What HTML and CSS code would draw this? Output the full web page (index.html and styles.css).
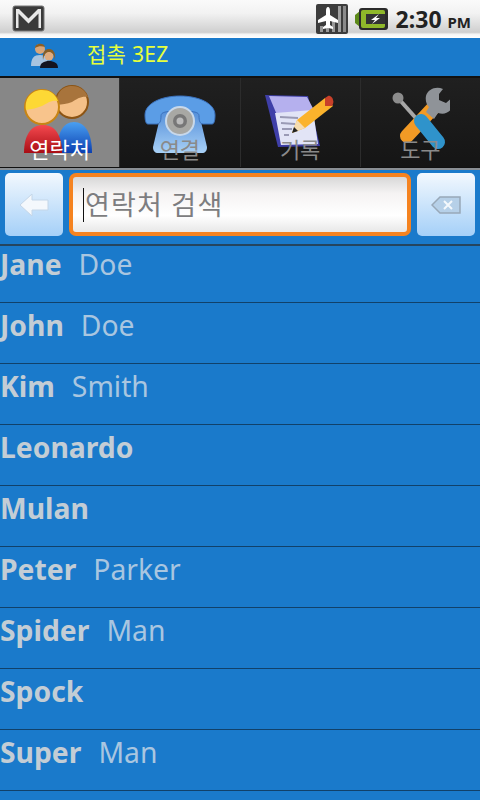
FILE: index.html
```html
<!DOCTYPE html>
<html lang="ko">
<head>
    <meta charset="UTF-8">
    <meta name="viewport" content="width=device-width, initial-scale=1.0">
    <title>연락처</title>
    <link rel="stylesheet" href="styles.css">
</head>
<body>
    <!-- Status bar -->
    <div class="status-bar">
        <svg class="gmail-icon" width="34" height="27" viewBox="0 0 34 27">
            <rect x="1" y="1" width="31" height="25" rx="2" fill="#3a3a3a" stroke="#777"/>
            <path d="M4 23V4h3l9.500 9.500L26 4h3v19h-2.500V8.500l-10 10-10-10V23z" fill="#e8e8e8"/>
        </svg>
        <div class="status-right">
            <svg width="32" height="30" viewBox="0 0 32 30">
                <rect width="32" height="30" rx="2" fill="#3c3c3c"/>
                <rect x="22" y="2" width="3" height="26" fill="#a0a0a0"/>
                <rect x="27" y="2" width="3" height="26" fill="#8a8a8a"/>
                <rect x="16" y="15" width="3" height="13" fill="#999"/>
                <rect x="10" y="20" width="3" height="8" fill="#999"/>
                <rect x="4" y="22" width="3" height="6" fill="#999"/>
                <path d="M12 3c1.500 0 2 2 2 4v4l8 5v3l-8-2v4l3 2v2l-5-1-5 1v-2l3-2v-4l-8 2v-3l8-5V7c0-2 .5-4 2-4z" fill="#fff"/>
            </svg>
            <svg class="battery-icon" width="33" height="22" viewBox="0 0 33 22">
                <path d="M0 7l5-4v16l-5-4z" fill="#5d8a1a"/>
                <rect x="4" y="0" width="29" height="22" rx="3" fill="#2a2a2a"/>
                <rect x="6" y="2" width="24" height="18" rx="2" fill="#8fb82a"/>
                <rect x="11" y="6" width="19" height="10" fill="#333"/>
                <path d="M24 6l-8 6h4l-3 4 8-6h-4z" fill="#fff"/>
            </svg>
            <div class="clock">2:30 <span class="clock-ampm">PM</span></div>
        </div>
    </div>

    <!-- Title bar -->
    <div class="title-bar">
        <svg class="title-icon" width="28" height="26" viewBox="0 0 28 26">
            <circle cx="10" cy="7" r="5" fill="#d9a679"/>
            <path d="M5 6c0-5 9-6 10-1-3-1-7-1-10 1z" fill="#8a5e24"/>
            <path d="M1 24c0-8 3-11 9-11s8 3 8 11z" fill="#a9c4e0"/>
            <circle cx="19" cy="14" r="4.500" fill="#e0ab7e"/>
            <path d="M13 18c-1-9 3-11 6-11s7 2 6 11c-1-6-3-8-6-8s-5 2-6 8z" fill="#8a5e24"/>
            <path d="M10 26c0-5 4-7 9-7s9 2 9 7z" fill="#141420"/>
        </svg>
        <span class="title-text">접촉 3EZ</span>
    </div>

    <!-- Tabs -->
    <div class="tabs">
        <div class="tab active">
            <svg width="72" height="76" viewBox="0 0 72 76">
                <defs>
                    <linearGradient id="redBody" x1="0" y1="0" x2="0" y2="1"><stop offset="0" stop-color="#f4494f"/><stop offset="1" stop-color="#a80d14"/></linearGradient>
                    <linearGradient id="blueBody" x1="0" y1="0" x2="0" y2="1"><stop offset="0" stop-color="#4aa0f2"/><stop offset="1" stop-color="#0b3fb0"/></linearGradient>
                </defs>
                <path d="M33 72c0-20 6-31 17-31s18 11 18 31z" fill="url(#blueBody)"/>
                <circle cx="48" cy="21" r="16" fill="#f4c088" stroke="#8c5414" stroke-width="2"/>
                <path d="M33 24c-2-12 6-19 15-19 8 0 13 4 16 11-7-1-11 2-16 5-5 2-10 2-15 3z" fill="#a8743c"/>
                <path d="M0 72c0-18 7-28 19-28s19 10 19 28z" fill="url(#redBody)"/>
                <circle cx="18" cy="26" r="17" fill="#f8c48c" stroke="#c88514" stroke-width="2"/>
                <path d="M2 29c-2-13 7-20 16-20 7 0 13 3 16 11-7-1-10 2-16 5-5 2-10 3-16 4z" fill="#fdd835"/>
            </svg>
            <span class="tab-label">연락처</span>
        </div>
        <div class="tab">
            <svg width="74" height="76" viewBox="0 0 74 76">
                <defs>
                    <linearGradient id="phoneBody" x1="0" y1="0" x2="0" y2="1"><stop offset="0" stop-color="#4f8bd8"/><stop offset="1" stop-color="#a8d0f6"/></linearGradient>
                </defs>
                <path d="M19 28h36l9 38c0 4-2 6-5 6H15c-3 0-5-2-5-6z" fill="url(#phoneBody)"/>
                <path d="M2 34C2 22 19 15 37 15s35 7 35 19c0 6-1 9-3 9h-9c-3 0-4-3-4-8 0-3-2-5-19-5s-19 2-19 5c0 5-1 8-4 8H5c-2 0-3-3-3-9z" fill="#5b9de6" stroke="#3a70bc"/>
                <circle cx="37" cy="40" r="14" fill="#a8a8a4" stroke="#c8d8ea" stroke-width="2"/>
                <circle cx="37" cy="40" r="7" fill="#777"/>
                <circle cx="37" cy="40" r="3.500" fill="#bbb"/>
            </svg>
            <span class="tab-label">연결</span>
        </div>
        <div class="tab">
            <svg width="72" height="76" viewBox="0 0 72 76">
                <path d="M1 14l43 1 12 50-42 1z" fill="#3f3fa8"/>
                <path d="M5 15l38 1 8 15-38 3z" fill="#b5b0ee"/>
                <path d="M11 32l38-3 5 34-37 1z" fill="#e2e4f6"/>
                <path d="M16 36l18 1M17 42l14 1M18 48l10 0M20 54l5 0" stroke="#9a9ab5" stroke-width="2"/>
                <path d="M28 52l5-13 28-22 8 8-28 22z" fill="#fbb32c"/>
                <path d="M61 17l3-2c2-1 5 2 5 4 1 2 0 4-1 6l-7 0z" fill="#c8402a"/>
                <path d="M28 52l5-13 8 8z" fill="#f6dcb0"/>
                <path d="M28 52l2-6 4 4z" fill="#222"/>
            </svg>
            <span class="tab-label">기록</span>
        </div>
        <div class="tab">
            <svg width="60" height="76" viewBox="0 0 60 76">
                <path d="M8 17l24 27" stroke="#a8a8a8" stroke-width="4"/>
                <circle cx="8" cy="17" r="5.500" fill="#8c8c8c"/>
                <path d="M44 26L17 55" stroke="#f29a25" stroke-width="14" stroke-linecap="round"/>
                <path d="M53 8c-7-3-15 0-17 7-1 5 1 9 3 11l-3 5 8 7 4-6c6 2 11 0 14-5 2-4 2-8 1-11l-7 6-7-3 0-6z" fill="#8f9398"/>
                <path d="M31 40l17 21" stroke="#2f93cb" stroke-width="14" stroke-linecap="round"/>
            </svg>
            <span class="tab-label">도구</span>
        </div>
    </div>

    <!-- Search -->
    <div class="search-bar">
        <div class="square-btn">
            <svg width="32" height="24" viewBox="0 0 32 24">
                <path d="M2 12L14 1v6h16v10H14v6z" fill="#f4f8fc" stroke="#c4d6e8"/>
            </svg>
        </div>
        <div class="search-box">
            <span class="caret"></span>
            <span class="placeholder">연락처 검색</span>
        </div>
        <div class="square-btn">
            <svg width="30" height="18" viewBox="0 0 30 18">
                <path d="M1 9l8-8h20v16H9z" fill="#b6d0e8" stroke="#98a8b8" stroke-width="1.500"/>
                <path d="M13 5l8 8M21 5l-8 8" stroke="#f4f8fc" stroke-width="2"/>
            </svg>
        </div>
    </div>

    <!-- Contact list -->
    <div class="contact-list">
        <div class="contact-items">
            <div class="contact"><b>Jane</b><span>Doe</span></div>
            <div class="contact"><b>John</b><span>Doe</span></div>
            <div class="contact"><b>Kim</b><span>Smith</span></div>
            <div class="contact"><b>Leonardo</b></div>
            <div class="contact"><b>Mulan</b></div>
            <div class="contact"><b>Peter</b><span>Parker</span></div>
            <div class="contact"><b>Spider</b><span>Man</span></div>
            <div class="contact"><b>Spock</b></div>
            <div class="contact"><b>Super</b><span>Man</span></div>
            <div class="contact"></div>
        </div>
    </div>
</body>
</html>
```

FILE: styles.css
```css
html, body {
    height: 100%;
}
body {
    margin: 0;
    height: 800px;
    overflow: hidden;
    display: flex;
    flex-direction: column;
    background-color: #1a7acb;
    font-family: "Noto Sans", "Noto Sans CJK KR", sans-serif;
}
.status-bar {
    flex: 0 0 38px;
    box-sizing: border-box;
    display: flex;
    align-items: center;
    justify-content: space-between;
    padding: 0 9px 0 12px;
    background: linear-gradient(#fafafa, #f2f2f2 35%, #cfcfcf 85%, #f4f4f4 90%, #fff);
}
.gmail-icon {
    margin-top: -1px;
}
.status-right {
    display: flex;
    align-items: center;
    gap: 6px;
}
.battery-icon {
    margin-left: 1px;
}
.clock {
    margin-left: 2px;
    font-size: 23px;
    font-weight: 700;
    color: #222;
    white-space: pre;
}
.clock-ampm {
    font-size: 15px;
}
.title-bar {
    flex: 0 0 38px;
    display: flex;
    align-items: center;
    padding-left: 30px;
    background-color: #1a7acb;
}
.title-icon {
    margin-top: -4px;
}
.title-text {
    margin-left: 29px;
    margin-top: -8px;
    font-size: 21px;
    letter-spacing: 0.3px;
    color: #e6ff3c;
}
.tabs {
    flex: 0 0 92px;
    box-sizing: border-box;
    display: flex;
    border-top: 2px solid #111;
    border-bottom: 1px solid #111;
    background-color: #1a1a1a;
}
.tab {
    flex: 1;
    position: relative;
    display: flex;
    justify-content: center;
    padding-top: 3px;
    border-left: 1px solid #2c2c2c;
    background: linear-gradient(#202020, #151515);
}
.tab:first-child {
    border-left: none;
}
.tab.active {
    background: #878787;
}
.tab-label {
    position: absolute;
    left: 0;
    right: 0;
    top: 57px;
    text-align: center;
    font-size: 22px;
    line-height: 28px;
    color: #8a8a8a;
}
.tab.active .tab-label {
    color: #fff;
}
.search-bar {
    flex: 0 0 78px;
    box-sizing: border-box;
    display: flex;
    gap: 6px;
    padding: 3px 5px 0 5px;
    border-top: 2px solid #8a8f94;
    border-bottom: 2px solid #25455f;
}
.square-btn {
    flex: 0 0 58px;
    height: 63px;
    border-radius: 5px;
    display: flex;
    align-items: center;
    justify-content: center;
    background: linear-gradient(#f2f8fe, #a5d0f8);
}
.search-box {
    flex: 1;
    height: 63px;
    box-sizing: border-box;
    display: flex;
    align-items: center;
    padding-left: 10px;
    border: 4px solid #f58320;
    border-radius: 7px;
    background: linear-gradient(#d8d8d8, #f5f3f3 30%, #ffffff 70%, #e8e8e8);
}
.caret {
    width: 1px;
    height: 34px;
    margin-right: 1px;
    background-color: #111;
}
.placeholder {
    margin-top: -2px;
    font-size: 27px;
    letter-spacing: 1.2px;
    color: #7d7d80;
}
.contact-list {
    flex: 1;
    overflow: hidden;
}
.contact-items {
    margin-top: -4px;
}
.contact {
    box-sizing: border-box;
    height: 61px;
    display: flex;
    align-items: center;
    gap: 17px;
    padding: 0 0 16px 0;
    border-bottom: 1px solid #11416a;
    font-size: 28.3px;
    color: #a9c6e0;
}
.contact b {
    font-weight: 700;
    color: #c3cdd5;
}
```
